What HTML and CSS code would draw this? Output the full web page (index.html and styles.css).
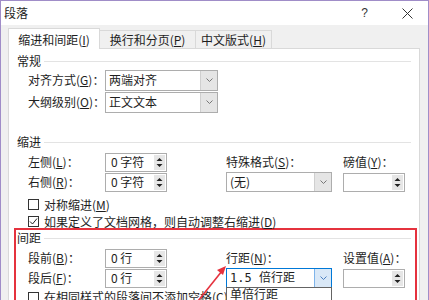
FILE: index.html
```html
<!DOCTYPE html>
<html lang="zh-CN">
<head>
  <meta charset="UTF-8" />
  <title>段落</title>
  <link rel="stylesheet" href="styles.css">
</head>
<body>
  <div class="window">
    <!-- 标题栏 -->
    <div class="titlebar">
      <span class="title">段落</span>
      <span class="title-btns">
        <span class="help">?</span>
        <svg class="close" width="11" height="11" viewBox="0 0 11 11"><path d="M0.5 0.5 L10.5 10.5 M10.5 0.5 L0.5 10.5" stroke="#333" stroke-width="1"/></svg>
      </span>
    </div>

    <div class="dialog">
      <!-- 选项卡 -->
      <div class="tabs">
        <div class="tab tab-1 active">缩进和间距(<u>I</u>)</div>
        <div class="tab tab-2">换行和分页(<u>P</u>)</div>
        <div class="tab tab-3">中文版式(<u>H</u>)</div>
      </div>

      <div class="page">
        <!-- 常规 -->
        <div class="group-title"><span>常规</span><i></i></div>
        <div class="row">
          <span class="label">对齐方式(<u>G</u>)：</span>
          <div class="select wide"><span>两端对齐</span><b class="drop"><svg width="7" height="4" viewBox="0 0 7 4"><path d="M0.5 0.5 L3.5 3.5 L6.5 0.5" fill="none" stroke="#777"/></svg></b></div>
        </div>
        <div class="row">
          <span class="label">大纲级别(<u>O</u>)：</span>
          <div class="select wide"><span>正文文本</span><b class="drop"><svg width="7" height="4" viewBox="0 0 7 4"><path d="M0.5 0.5 L3.5 3.5 L6.5 0.5" fill="none" stroke="#777"/></svg></b></div>
        </div>

        <!-- 缩进 -->
        <div class="group-title indent-title"><span>缩进</span><i></i></div>
        <div class="grid">
          <span class="label">左侧(<u>L</u>)：</span>
          <div class="spin"><span>0 字符</span><b class="spin-btn"><svg width="7" height="11" viewBox="0 0 7 11"><path d="M3.5 1 L6.5 4 L0.5 4 Z M0.5 7 L6.5 7 L3.5 10 Z" fill="#222"/></svg></b></div>
          <span class="label">特殊格式(<u>S</u>)：</span>
          <span class="label">磅值(<u>Y</u>)：</span>

          <span class="label">右侧(<u>R</u>)：</span>
          <div class="spin"><span>0 字符</span><b class="spin-btn"><svg width="7" height="11" viewBox="0 0 7 11"><path d="M3.5 1 L6.5 4 L0.5 4 Z M0.5 7 L6.5 7 L3.5 10 Z" fill="#222"/></svg></b></div>
          <div class="select"><span>(无)</span><b class="drop"><svg width="7" height="4" viewBox="0 0 7 4"><path d="M0.5 0.5 L3.5 3.5 L6.5 0.5" fill="none" stroke="#777"/></svg></b></div>
          <div class="spin"><span></span><b class="spin-btn"><svg width="7" height="11" viewBox="0 0 7 11"><path d="M3.5 1 L6.5 4 L0.5 4 Z M0.5 7 L6.5 7 L3.5 10 Z" fill="#222"/></svg></b></div>
        </div>

        <div class="check-row first"><span class="box"></span>对称缩进(<u>M</u>)</div>
        <div class="check-row"><span class="box checked"><svg width="9" height="9" viewBox="0 0 9 9"><path d="M1 4.5 L3.5 7 L8 1.5" fill="none" stroke="#222" stroke-width="1"/></svg></span>如果定义了文档网格，则自动调整右缩进(<u>D</u>)</div>

        <!-- 间距（红框标注） -->
        <div class="highlight">
          <div class="group-title"><span>间距</span><i></i></div>
          <div class="grid">
            <span class="label">段前(<u>B</u>)：</span>
            <div class="spin"><span>0 行</span><b class="spin-btn"><svg width="7" height="11" viewBox="0 0 7 11"><path d="M3.5 1 L6.5 4 L0.5 4 Z M0.5 7 L6.5 7 L3.5 10 Z" fill="#222"/></svg></b></div>
            <span class="label">行距(<u>N</u>)：</span>
            <span class="label">设置值(<u>A</u>)：</span>

            <span class="label">段后(<u>F</u>)：</span>
            <div class="spin"><span>0 行</span><b class="spin-btn"><svg width="7" height="11" viewBox="0 0 7 11"><path d="M3.5 1 L6.5 4 L0.5 4 Z M0.5 7 L6.5 7 L3.5 10 Z" fill="#222"/></svg></b></div>
            <div class="select open">
              <span class="mono">1.5 倍行距</span><b class="drop"><svg width="7" height="4" viewBox="0 0 7 4"><path d="M0.5 0.5 L3.5 3.5 L6.5 0.5" fill="none" stroke="#4a7fc0"/></svg></b>
              <div class="list">
                <div class="item">单倍行距</div>
                <div class="item selected">1.5 倍行距</div>
              </div>
            </div>
            <div class="spin"><span></span><b class="spin-btn"><svg width="7" height="11" viewBox="0 0 7 11"><path d="M3.5 1 L6.5 4 L0.5 4 Z M0.5 7 L6.5 7 L3.5 10 Z" fill="#222"/></svg></b></div>
          </div>
          <div class="check-row"><span class="box"></span>在相同样式的段落间不添加空格(<u>C</u>)</div>
        </div>
      </div>
    </div>
  </div>

  <!-- 红色箭头标注 -->
  <svg class="arrow" width="429" height="300" viewBox="0 0 429 300">
    <line x1="194" y1="306" x2="222" y2="271" stroke="#e5323e" stroke-width="1.6"/>
    <path d="M226 266 L217 270 L223 275 Z" fill="#e5323e"/>
  </svg>
</body>
</html>
```

FILE: styles.css
```css
/* 清除默认边距 */
* {
  margin: 0;
  padding: 0;
  box-sizing: border-box;
}

body {
  width: 429px;
  height: 300px;
  overflow: hidden;
  position: relative;
  background: #fff;
  font-family: "Noto Sans CJK SC", "Microsoft YaHei", sans-serif;
  font-size: 12px;
  line-height: 16px;
  color: #1e1e1e;
}

u {
  text-decoration: underline;
  text-underline-offset: 1px;
}

/* 窗口外框：紫色边 */
.window {
  height: 330px;
  border: 1px solid #a08dc8;
  border-bottom: none;
  background: #f0f0f0;
}

.titlebar {
  height: 24px;
  background: #fff;
  display: flex;
  align-items: center;
  justify-content: space-between;
  padding-left: 3px;
}
.title-btns {
  display: flex;
  align-items: center;
  padding-right: 15px;
}
.help {
  font-family: "Liberation Sans", sans-serif;
  font-size: 12px;
  color: #333;
  margin-right: 34px;
}

/* 对话框主体 */
.dialog {
  padding: 3px 8px 0 7px;
}

.tabs {
  display: flex;
  align-items: flex-end;
  height: 20px;
}
.tab {
  height: 18px;
  line-height: 17px;
  text-align: center;
  border: 1px solid #d9d9d9;
  border-bottom: none;
  background: #f0f0f0;
  margin-left: -1px;
  white-space: nowrap;
}
.tab-1 { width: 92px; margin-left: 0; }
.tab-2 { width: 97px; }
.tab-3 { width: 77px; }
.tab.active {
  height: 21px;
  line-height: 21px;
  margin-bottom: -1px;
  background: #fff;
  position: relative;
  z-index: 1;
}

.page {
  background: #fff;
  border: 1px solid #d9d9d9;
  padding: 4px 8px 0 8px;
}

/* 分组标题 + 横线 */
.group-title {
  display: flex;
  align-items: center;
  height: 16px;
}
.group-title i {
  flex: 1;
  border-top: 1px solid #e3e3e3;
  margin-left: 3px;
}
.indent-title {
  margin-top: 21px;
}

.row {
  display: flex;
  align-items: center;
  height: 22px;
  padding-left: 11px;
}
.label {
  width: 77px;
  white-space: nowrap;
}

/* 下拉框 */
.select {
  width: 106px;
  height: 20px;
  border: 1px solid #adadad;
  background: #fff;
  display: flex;
  align-items: center;
  padding-left: 3px;
  position: relative;
}
.select.wide {
  width: 113px;
  height: 21px;
}
.select > span {
  flex: 1;
  white-space: nowrap;
}
.drop {
  width: 17px;
  height: 100%;
  background: #e5e5e5;
  border-left: 1px solid #cfcfcf;
  display: flex;
  align-items: center;
  justify-content: center;
}

/* 展开状态的行距下拉 */
.select.open {
  border-color: #0078d7;
}
.select.open .drop {
  background: #d9e8f7;
  border-left-color: #7eb4ea;
}
.mono {
  font-family: "DejaVu Sans Mono", "Noto Sans CJK SC", monospace;
  letter-spacing: 0;
}
.list {
  position: absolute;
  top: 100%;
  left: -1px;
  width: 106px;
  background: #fff;
  border: 1px solid #646464;
  z-index: 2;
}
.item {
  height: 12px;
  line-height: 12px;
  padding-left: 3px;
  white-space: nowrap;
}
.item.selected {
  height: 14px;
  background: #0078d7;
  color: #fff;
}

/* 微调框 */
.spin {
  width: 62px;
  height: 19px;
  border: 1px solid #adadad;
  background: #fff;
  display: flex;
  align-items: center;
  padding-left: 5px;
}
.spin > span {
  flex: 1;
  white-space: nowrap;
}
.spin-btn {
  width: 11px;
  height: 15px;
  margin-right: 1px;
  background: #e6e6e6;
  display: flex;
  align-items: center;
  justify-content: center;
}

.grid {
  display: grid;
  grid-template-columns: 77px 121px 117px 66px;
  grid-auto-rows: 20px;
  align-items: center;
  margin-top: 2px;
  padding-left: 11px;
}

/* 复选框 */
.check-row {
  display: flex;
  align-items: center;
  height: 17px;
  padding-left: 11px;
  white-space: nowrap;
}
.check-row.first {
  margin-top: 4px;
}
.box {
  width: 11px;
  height: 11px;
  border: 1px solid #333;
  background: #fff;
  margin-right: 5px;
  display: flex;
  align-items: center;
  justify-content: center;
}

/* 红框标注 */
.highlight {
  border: 2px solid #e5323e;
  margin: -2px -6px 0 -3px;
  padding: 0 4px 20px 1px;
}
.highlight .check-row {
  height: 18px;
}

.arrow {
  position: absolute;
  top: 0;
  left: 0;
  pointer-events: none;
}
```
